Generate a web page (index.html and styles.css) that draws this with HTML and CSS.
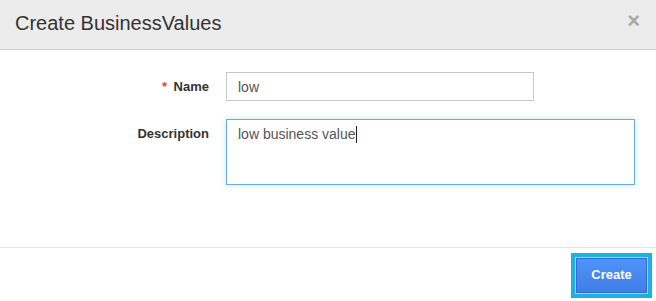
FILE: index.html
```html
<!DOCTYPE html>
<html lang="en">

<head>
    <meta charset="UTF-8" />
    <title>Create BusinessValues</title>
    <link rel="stylesheet" href="styles.css">
</head>

<body>
    <div class="modal">
        <header class="modal-header">
            <h4 class="modal-title">Create BusinessValues</h4>
            <span class="close">&times;</span>
        </header>

        <div class="modal-body">
            <label class="control-label"><span class="req">*</span> Name</label>
            <div class="field">
                <input type="text" class="form-control name-input" value="low" />
            </div>

            <label class="control-label">Description</label>
            <div class="field">
                <div class="form-control textarea focused">low business value<span class="caret"></span></div>
            </div>
        </div>

        <footer class="modal-footer">
            <button class="btn-primary">Create</button>
        </footer>
    </div>
</body>

</html>
```

FILE: styles.css
```css
* {
    box-sizing: border-box;
    margin: 0;
    padding: 0;
}

body {
    font-family: "Liberation Sans", Arial, sans-serif;
    background: #fff;
    color: #333;
    width: 656px;
    height: 301px;
    overflow: hidden;
}

.modal-header {
    display: flex;
    justify-content: space-between;
    align-items: center;
    height: 50px;
    padding: 0 16px 3px 15px;
    background-color: #ececec;
    border-bottom: 1px solid #cfcfcf;
}

.modal-title {
    font-size: 20px;
    font-weight: normal;
    color: #333;
}

.close {
    font-size: 22px;
    font-weight: bold;
    color: #a8a8a8;
    line-height: 1;
    margin-top: -4px;
}

.modal-body {
    display: grid;
    grid-template-columns: 194px 1fr;
    column-gap: 17px;
    row-gap: 18px;
    height: 197px;
    padding: 22px 21px 0 15px;
    align-content: start;
}

.control-label {
    text-align: right;
    font-size: 13px;
    font-weight: bold;
    line-height: 20px;
    padding-top: 5px;
    color: #333;
}

.req {
    color: #e0404a;
    margin-right: 3px;
}

.form-control {
    display: block;
    font-family: "Liberation Sans", Arial, sans-serif;
    font-size: 14px;
    color: #555;
    border: 1px solid #c8c8c8;
    background: #fff;
    padding: 0 11px;
    outline: none;
}

.name-input {
    width: 308px;
    height: 29px;
    padding-top: 1px;
}

.textarea {
    width: 100%;
    height: 66px;
    padding-top: 4px;
    line-height: 20px;
}

.focused {
    border-color: #66aeea;
    box-shadow: 0 0 6px rgba(102, 175, 233, 0.35);
}

.caret {
    display: inline-block;
    width: 1px;
    height: 17px;
    background: #222;
    vertical-align: -4px;
}

.modal-footer {
    display: flex;
    justify-content: flex-end;
    border-top: 1px solid #e5e5e5;
    padding: 10px 9px 0 0;
}

.btn-primary {
    width: 71px;
    height: 35px;
    padding-bottom: 2px;
    font-family: "Liberation Sans", Arial, sans-serif;
    font-size: 13px;
    font-weight: bold;
    color: #fff;
    background: linear-gradient(#5093f8, #3f7ee8);
    border: 1px solid #3469d2;
    box-shadow: 0 0 0 1px #a9cdf6, 0 0 0 5px #1cb1e2;
    cursor: pointer;
}
```
